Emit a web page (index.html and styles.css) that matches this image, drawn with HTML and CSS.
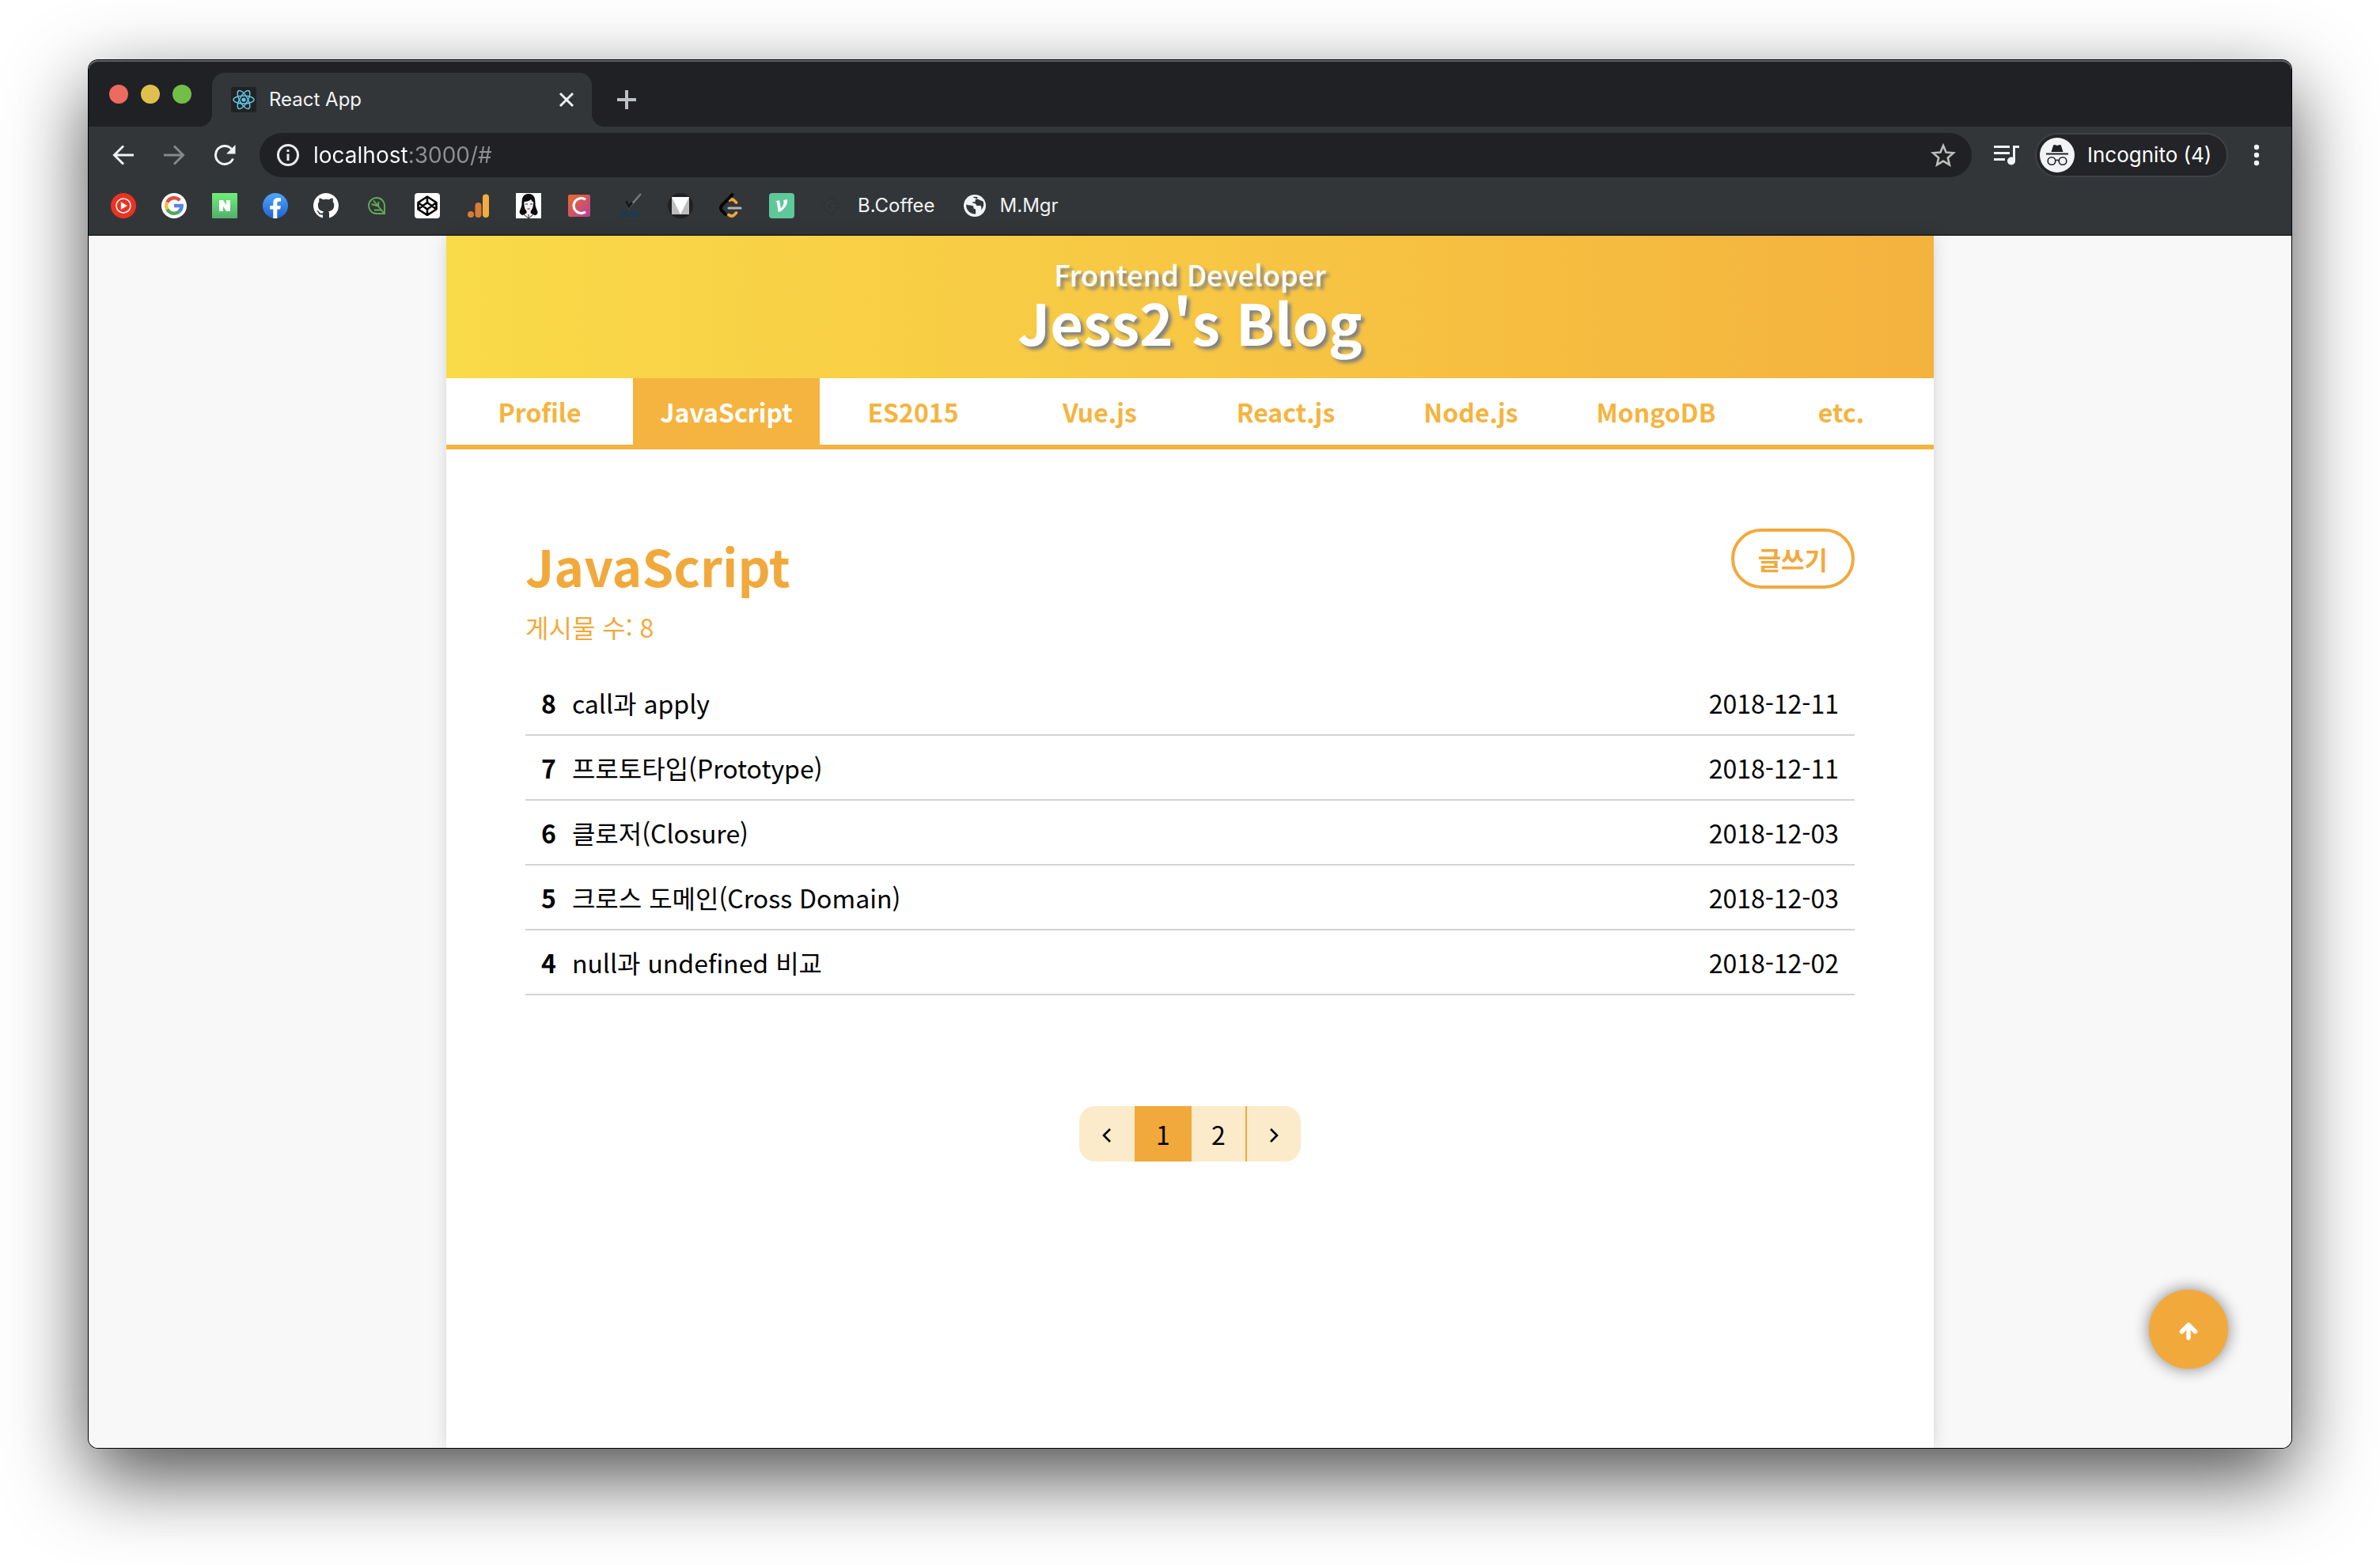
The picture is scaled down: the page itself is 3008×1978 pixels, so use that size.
FILE: index.html
```html
<!DOCTYPE html>
<html lang="ko">
<head>
<meta charset="utf-8">
<meta name="viewport" content="width=device-width, initial-scale=1">
<title>React App</title>
<link rel="stylesheet" href="styles.css">
</head>
<body>
<div class="window">
  <div class="tabstrip">
    <div class="lights">
      <button class="light light-close" aria-label="Close window"></button>
      <button class="light light-min" aria-label="Minimize window"></button>
      <button class="light light-max" aria-label="Zoom window"></button>
    </div>
    <div class="tab">
      <svg class="icon32" viewBox="0 0 32 32" aria-hidden="true"><rect width="32" height="32" rx="3" fill="#222"/><g fill="none" stroke="#61c5e8" stroke-width="1.5"><ellipse cx="16" cy="16" rx="13" ry="5"/><ellipse cx="16" cy="16" rx="13" ry="5" transform="rotate(60 16 16)"/><ellipse cx="16" cy="16" rx="13" ry="5" transform="rotate(120 16 16)"/></g><circle cx="16" cy="16" r="2.6" fill="#61c5e8"/></svg>
      <span class="tab-title">React App</span>
      <button class="tab-close" aria-label="Close tab"><svg width="20" height="20" viewBox="0 0 20 20"><path d="M2 2l16 16M18 2L2 18" stroke="#f1f3f4" stroke-width="3"/></svg></button>
    </div>
    <button class="new-tab" aria-label="New tab"><svg width="24" height="24" viewBox="0 0 24 24"><path d="M12 0v24M0 12h24" stroke="#bdc1c6" stroke-width="4"/></svg></button>
  </div>

  <div class="toolbar">
    <button class="tool" aria-label="Back"><svg width="28" height="28" viewBox="0 0 28 28" fill="none" stroke="#f1f3f4" stroke-width="3"><path d="M27 14H3M14 2.500L2.500 14L14 25.500"/></svg></button>
    <button class="tool" aria-label="Forward"><svg width="28" height="28" viewBox="0 0 28 28" fill="none" stroke="#85888a" stroke-width="3"><path d="M1 14h24M14 2.500L25.500 14L14 25.500"/></svg></button>
    <button class="tool" aria-label="Reload"><svg width="28" height="28" viewBox="0 0 28 28"><path d="M24.500 18.500A11.500 11.500 0 1 1 22.500 6.200" fill="none" stroke="#f1f3f4" stroke-width="3"/><path d="M27.500 1v11.500H16z" fill="#f1f3f4"/></svg></button>
    <div class="omnibox">
      <svg width="28" height="28" viewBox="0 0 28 28" aria-hidden="true"><circle cx="14" cy="14" r="12.500" fill="none" stroke="#e8eaed" stroke-width="3"/><path d="M12.500 12.500h3V21h-3zM12.500 7h3v3h-3z" fill="#e8eaed"/></svg>
      <input class="url" type="text" value="localhost:3000/#" aria-label="Address" spellcheck="false">
      <button class="star" aria-label="Bookmark this page"><svg width="32" height="32" viewBox="0 0 32 32"><path d="M16 4l3.600 8.500 9.200.8-7 6.100 2.100 9L16 23.600l-7.900 4.800 2.100-9-7-6.100 9.200-.8z" fill="none" stroke="#bdbdbd" stroke-width="2.600"/></svg></button>
    </div>
    <button class="queue" aria-label="Media controls"><svg width="32" height="28" viewBox="0 0 32 28" fill="#f1f3f4"><path d="M0 2h20v3H0zM0 10h20v3H0zM0 18h14v3H0zM24 2h8v3h-5v16h-3z"/><circle cx="22" cy="21.500" r="5"/></svg></button>
    <button class="profile">
      <svg width="44" height="44" viewBox="0 0 44 44" aria-hidden="true"><circle cx="22" cy="22" r="22" fill="#f1f3f4"/><path d="M14.500 18l2.600-8.200c.3-.8 1-1 1.800-.7l3.100.9 3.100-.9c.8-.3 1.500-.1 1.800.7L29.500 18zM8 19.500h28v2H8z" fill="#202124"/><g fill="none" stroke="#202124" stroke-width="1.600"><circle cx="15" cy="29.500" r="4.800"/><circle cx="29" cy="29.500" r="4.800"/><path d="M19.800 29c1.400-1 3-1 4.400 0"/></g></svg>
      <span>Incognito (4)</span>
    </button>
    <button class="menu" aria-label="Menu"><svg width="8" height="28" viewBox="0 0 8 28" fill="#f1f3f4"><circle cx="4" cy="4" r="3.200"/><circle cx="4" cy="14" r="3.200"/><circle cx="4" cy="24" r="3.200"/></svg></button>
  </div>

  <nav class="bookmarks" aria-label="Bookmarks">
    <a href="#" aria-label="YouTube Music"><svg class="icon32" viewBox="0 0 32 32"><circle cx="16" cy="16" r="16" fill="#ea3323"/><circle cx="16" cy="16" r="9" fill="none" stroke="#fff" stroke-width="1.500"/><path d="M12.800 11.300L21 16l-8.200 4.700z" fill="#fff"/></svg></a>
    <a href="#" aria-label="Google"><svg class="icon32" viewBox="0 0 32 32"><circle cx="16" cy="16" r="16" fill="#fff"/><g fill="none" stroke-width="4.400"><path d="M23.200 9.200A9.800 9.800 0 0 0 7.300 11.600" stroke="#d9503f"/><path d="M7.300 11.600a9.800 9.800 0 0 0 0 8.900" stroke="#f2bd42"/><path d="M7.300 20.500a9.800 9.800 0 0 0 15 3" stroke="#58a55c"/><path d="M22.300 23.500a9.800 9.800 0 0 0 3.400-7.500H16" stroke="#5384ec"/></g></svg></a>
    <a href="#" aria-label="Naver"><svg class="icon32" viewBox="0 0 32 32"><defs><linearGradient id="nv" x2="0" y2="1"><stop stop-color="#70ee78"/><stop offset="1" stop-color="#52b06c"/></linearGradient></defs><rect width="32" height="32" rx="1" fill="url(#nv)"/><path d="M9 9h5l4 6V9h5v14h-5l-4-6v6H9z" fill="#fff"/></svg></a>
    <a href="#" aria-label="Facebook"><svg class="icon32" viewBox="0 0 32 32"><defs><linearGradient id="fb" x2="0" y2="1"><stop stop-color="#4da7f7"/><stop offset="1" stop-color="#2461d8"/></linearGradient></defs><circle cx="16" cy="16" r="16" fill="url(#fb)"/><path d="M13.300 32V20.500H9.200V16h4.100v-3.600c0-4.100 2.400-6.300 6.100-6.300 1.800 0 3.600.3 3.600.3v4h-2c-2 0-2.700 1.200-2.700 2.500V16h4.500l-.7 4.500h-3.800V32z" fill="#fff"/></svg></a>
    <a href="#" aria-label="GitHub"><svg class="icon32" viewBox="0 0 16 16"><path fill="#fff" d="M8 0C3.580 0 0 3.580 0 8c0 3.540 2.290 6.530 5.470 7.590.4.070.55-.17.55-.38 0-.19-.01-.82-.01-1.490-2.010.37-2.530-.49-2.690-.94-.09-.23-.48-.94-.82-1.130-.28-.15-.68-.52-.01-.53.630-.01 1.080.58 1.230.82.720 1.210 1.870.87 2.330.66.070-.52.280-.87.510-1.070-1.780-.2-3.640-.89-3.640-3.950 0-.87.310-1.590.82-2.150-.08-.2-.36-1.020.08-2.120 0 0 .67-.21 2.200.82.640-.18 1.320-.27 2-.27s1.360.09 2 .27c1.530-1.040 2.200-.82 2.200-.82.440 1.100.16 1.920.08 2.120.51.560.82 1.270.82 2.150 0 3.070-1.870 3.750-3.650 3.950.29.250.54.730.54 1.480 0 1.070-.01 1.930-.01 2.200 0 .21.150.46.55.38A8.010 8.010 0 0 0 16 8c0-4.420-3.580-8-8-8z"/></svg></a>
    <a href="#" aria-label="Leaf"><svg class="icon32" viewBox="0 0 32 32"><g fill="none" stroke="#5fae50" stroke-width="1.900"><path d="M26 26H15.500A10 10 0 1 1 26 16zM25 25L12 9.500M18 16.500l-8.500-2.500M18 17l.5-6M22 21.500H13"/></g></svg></a>
    <a href="#" aria-label="CodePen"><svg class="icon32" viewBox="0 0 32 32"><rect width="32" height="32" rx="4" fill="#fff"/><path d="M16 4.500L27.500 12v8.500L16 27.800 4.500 20.500V12zM16 4.500V12M16 20.500v7M4.500 12L16 20.500 27.500 12M4.500 20.500L16 12l11.500 8.500" fill="none" stroke="#000" stroke-width="2.600" stroke-linejoin="round"/></svg></a>
    <a href="#" aria-label="Analytics"><svg class="icon32" viewBox="0 0 32 32"><circle cx="7" cy="27" r="4" fill="#d97c38"/><rect x="12.500" y="12" width="8" height="19" rx="4" fill="#d97c38"/><rect x="22" y="1.500" width="8" height="29.500" rx="4" fill="#f2ad41"/></svg></a>
    <a href="#" aria-label="Portrait"><svg class="icon32" viewBox="0 0 32 32"><path fill="#fff" d="M0 0h32v32H0z"/><path d="M16 1C8 1 7.500 8 7.500 13c0 5-2 7-3 11 1 4 5 5 8 4h8c4 1 7 0 7-4-1-4-3-6-3-11C24.500 8 24 1 16 1z" fill="#0b0b0d"/><path d="M10.500 11c3 0 7-1 8.500-3 1 2 2 3 3.200 3.300 0 5-1.200 9.700-3.500 11.200v3L26 29v3H6v-3l7.500-3.500v-3C11 20.500 10 16 10.500 11z" fill="#f2f2f2"/><path d="M12 14h3M18 14h3M14.500 20h3M10 27l6 5 6-5M16 27v5" stroke="#222" fill="none"/></svg></a>
    <a href="#" aria-label="C"><svg class="icon32" viewBox="0 0 32 32"><defs><linearGradient id="cc" x2="1" y2="1"><stop stop-color="#ea6b2c"/><stop offset="1" stop-color="#b93f98"/></linearGradient></defs><rect x="2" y="2" width="28" height="28" rx="2" fill="url(#cc)"/><path d="M24 8.200A9.500 9.500 0 1 0 24 23.800" fill="none" stroke="#fff" stroke-width="3.200"/></svg></a>
    <a href="#" aria-label="JSON"><svg class="icon32 overflowing" viewBox="0 0 32 32"><path d="M11 10l4 8L30 1" fill="none" stroke="#77797d" stroke-width="2.500"/><path d="M11 10l4 7 4-5" fill="none" stroke="#17181c" stroke-width="3"/><text class="json" x="1" y="31">JSON</text></svg></a>
    <a href="#" aria-label="Material"><svg class="icon32" viewBox="0 0 32 32"><circle cx="16" cy="16" r="16" fill="#212121"/><path fill="#bdbdbd" d="M5 5h22v22H5z"/><path fill="#fff" d="M5 5h22L16 27z"/></svg></a>
    <a href="#" aria-label="LeetCode"><svg class="icon32" viewBox="0 0 32 32" fill="none" stroke-width="3.800" stroke-linecap="round"><path d="M14.500 9c2-1.500 4-1 5.500.5l2.500 2.500M13 27.500c2.500 2 5 2 7 0l2.500-2.500" stroke="#f2a33a"/><path d="M17.500 2L4 16c-1.500 2-1.500 4 0 6l5 5" stroke="#000"/><path d="M13 19h15" stroke="#b3b3b3" stroke-width="3.200"/></svg></a>
    <a href="#" aria-label="Velog"><svg class="icon32" viewBox="0 0 32 32"><rect width="32" height="32" rx="4" fill="#5fc89b"/><path d="M8 10.500l5-1.500 2 10.500c3-3.500 4.200-6.500 3.200-10.500L23 8c.8 6-3 12-9 15.500h-2.500L10 12z" fill="#fff"/></svg></a>
    <a class="labelled" href="#"><svg class="icon32" viewBox="0 0 32 32" aria-hidden="true"><path d="M15 3l12 13-12 13L3 16z" fill="#313335"/><path d="M18 11a6 6 0 1 0 1 9M15 16h4" fill="none" stroke="#36393c" stroke-width="2"/></svg>B.Coffee</a>
    <a class="labelled" href="#"><svg class="icon32" viewBox="0 0 32 32" aria-hidden="true"><circle cx="16" cy="16" r="14" fill="#f1f3f4"/><path d="M5.200 14.500c3.500 1.500 6.800.5 9 2.200.8 1-.4 2 .4 2.900 1.200.6 2.500.4 2.500 2v4.900A11 11 0 0 1 5.200 14.500zM13.500 5.300c3-1 5.500-.3 6 .2-.4 1.800-.5 2.300-2.500 2.500-.8.900.3 2.200-.7 3-1.300.6-2.500-.3-3.300.8-.3 1.200 1.500 1 2.800 1.200 2 .3 1.700 2.700 3.200 3 1.500.2 3-.8 4.500.2 1 1.200 1.200 3 .2 5.300 3.300-2.600 4.200-7 2.800-11" fill="#323639"/></svg>M.Mgr</a>
  </nav>

  <div class="viewport">
    <div class="page">
      <header class="banner">
        <p class="role">Frontend Developer</p>
        <h1 class="blog-title">Jess2's Blog</h1>
      </header>
      <nav class="categories" aria-label="Categories">
        <a href="#">Profile</a>
        <a class="active" href="#">JavaScript</a>
        <a href="#">ES2015</a>
        <a href="#">Vue.js</a>
        <a href="#">React.js</a>
        <a href="#">Node.js</a>
        <a href="#">MongoDB</a>
        <a href="#">etc.</a>
      </nav>
      <main class="content">
        <div class="heading">
          <div>
            <h2 class="category-title">JavaScript</h2>
            <p class="count">게시물 수: 8</p>
          </div>
          <button class="write">글쓰기</button>
        </div>
        <table class="posts">
          <tr><th scope="row">8</th><td><a href="#">call과 apply</a></td><td class="date">2018-12-11</td></tr>
          <tr><th scope="row">7</th><td><a href="#">프로토타입(Prototype)</a></td><td class="date">2018-12-11</td></tr>
          <tr><th scope="row">6</th><td><a href="#">클로저(Closure)</a></td><td class="date">2018-12-03</td></tr>
          <tr><th scope="row">5</th><td><a href="#">크로스 도메인(Cross Domain)</a></td><td class="date">2018-12-03</td></tr>
          <tr><th scope="row">4</th><td><a href="#">null과 undefined 비교</a></td><td class="date">2018-12-02</td></tr>
        </table>
        <nav class="pagination" aria-label="Pages">
          <button class="prev" aria-label="Previous"><svg width="12" height="20" viewBox="0 0 12 20"><path d="M10 2L2 10l8 8" fill="none" stroke="#000" stroke-width="2.600"/></svg></button>
          <button class="current">1</button>
          <button>2</button>
          <button class="next" aria-label="Next"><svg width="12" height="20" viewBox="0 0 12 20"><path d="M2 2l8 8-8 8" fill="none" stroke="#000" stroke-width="2.600"/></svg></button>
        </nav>
      </main>
    </div>
    <button class="to-top" aria-label="Back to top"><svg width="24" height="24" viewBox="0 0 24 24"><path d="M12 20V4M3.500 12L12 3.500l8.500 8.500" fill="none" stroke="#fff" stroke-width="5.500" stroke-linecap="round" stroke-linejoin="round"/></svg></button>
  </div>
</div>
</body>
</html>
```

FILE: styles.css
```css
* { box-sizing: border-box; }

body {
  margin: 0;
  min-height: 100vh;
  padding: 76px 112px 148px;
  display: flex;
  background: #fff;
  font-family: "Noto Sans CJK KR", sans-serif;
  font-size: 32px;
  line-height: 48px;
  color: #000;
}

button, input {
  margin: 0;
  padding: 0;
  border: 0;
  background: none;
  font: inherit;
  color: inherit;
}

button { display: flex; align-items: center; justify-content: center; cursor: pointer; }
a { color: inherit; text-decoration: none; }
svg { display: block; flex: none; }
h1, h2, p { margin: 0; }

.window {
  flex: 1;
  min-width: 0;
  display: flex;
  flex-direction: column;
  border-radius: 12px;
  overflow: hidden;
  box-shadow: 0 0 0 1px #000, 0 36px 100px rgba(0, 0, 0, .7);
}

.icon32 { width: 32px; height: 32px; }
.overflowing { overflow: visible; }

/* browser chrome */
.tabstrip, .toolbar, .bookmarks {
  display: flex;
  font-family: Inter, sans-serif;
  font-size: 24px;
  line-height: 32px;
  color: #f1f3f4;
  background: #323639;
}

.tabstrip {
  height: 84px;
  padding: 2px 0 0 26px;
  align-items: flex-end;
  background: #202124;
  border-radius: 12px 12px 0 0;
  box-shadow: inset 0 2px 0 #606364;
}

.lights { display: flex; gap: 16px; align-self: center; margin-right: 26px; }
.light { width: 24px; height: 24px; border-radius: 50%; }
.light-close { background: #ec6a5e; }
.light-min { background: #e0c04c; }
.light-max { background: #72be47; }

.tab {
  position: relative;
  width: 480px;
  height: 68px;
  padding: 0 20px 0 24px;
  display: flex;
  align-items: center;
  gap: 16px;
  background: #323639;
  border-radius: 16px 16px 0 0;
}

.tab::before, .tab::after {
  content: "";
  position: absolute;
  bottom: 0;
  width: 16px;
  height: 16px;
}
.tab::before { left: -16px; background: radial-gradient(circle at 0 0, transparent 16px, #323639 16px); }
.tab::after { right: -16px; background: radial-gradient(circle at 100% 0, transparent 16px, #323639 16px); }

.tab-title { flex: 1; }
.tab-close { width: 24px; height: 24px; }
.new-tab { height: 68px; margin-left: 32px; }

.toolbar { padding: 8px 8px 8px 12px; }
.tool { width: 64px; height: 56px; }

.omnibox {
  flex: 1;
  margin-left: 12px;
  height: 56px;
  padding: 0 20px 0 22px;
  display: flex;
  align-items: center;
  gap: 18px;
  border-radius: 28px;
  background: #202124;
}

.url {
  flex: 1;
  min-width: 0;
  height: 40px;
  font-size: 28px;
  line-height: 40px;
  outline: 0;
  color: transparent;
  background: linear-gradient(90deg, #fff 121px, #8e9093 121px);
  -webkit-background-clip: text;
  background-clip: text;
}

.queue { width: 80px; padding-left: 8px; }

.profile {
  height: 56px;
  width: 244px;
  padding-left: 4px;
  justify-content: flex-start;
  gap: 16px;
  border: 2px solid #3e4145;
  border-radius: 28px;
  background: #232427;
  color: #fff;
  font-size: 26px;
}

.menu { width: 72px; }

.bookmarks {
  padding: 12px 28px 20px;
  gap: 32px;
  border-bottom: 2px solid #252729;
}
.labelled { display: flex; gap: 16px; }
.labelled + .labelled { margin-left: 2px; }
.json { font: bold 11px "DejaVu Sans Mono", monospace; fill: #16395c; }

/* blog */
.viewport {
  position: relative;
  flex: 1;
  display: flex;
  justify-content: center;
  background: #f8f8f8;
}

.page {
  width: 100%;
  max-width: 1880px;
  background: #fff;
  box-shadow: 0 0 20px rgba(0, 0, 0, .15);
}

.banner {
  padding: 22px 0 38px;
  text-align: center;
  color: #fff;
  text-shadow: 4px 4px 4px #808080;
  background: linear-gradient(90deg, #f9da48, #f8cb44 40%, #f4b23e);
}
.role { font-size: 36px; line-height: 52px; font-weight: 500; }
.blog-title { font-size: 72px; line-height: 68px; font-weight: 700; }

.categories {
  display: grid;
  grid-template-columns: repeat(4, 236fr) repeat(4, 234fr);
  border-bottom: 6px solid #f5b43f;
  color: #f5b43f;
  font-weight: 700;
  text-align: center;
  line-height: 84px;
}
.categories .active { background: #f5b43f; color: #fff; }

.content { padding: 100px; }
.heading { display: flex; justify-content: space-between; align-items: flex-start; color: #f2a93b; }
.category-title { font-size: 64px; line-height: 92px; font-weight: 700; }
.count { margin-top: 8px; }

.write {
  height: 76px;
  padding: 0 30px;
  border: 4px solid #f2a93b;
  border-radius: 38px;
  font-weight: 700;
}

.posts { width: 100%; margin-top: 32px; border-spacing: 0; }
.posts th, .posts td { padding: 16px 0 16px 20px; border-bottom: 2px solid #d3d3d3; text-align: left; }
.posts th { width: 1px; font-weight: 700; }
.posts .date { padding-right: 20px; text-align: right; }

.pagination {
  display: grid;
  grid-template-columns: 70px 72px 68px 70px;
  justify-content: center;
  margin-top: 140px;
}
.pagination button { height: 70px; background: #fcebca; }
.pagination .prev, .pagination .next { padding-top: 4px; }
.pagination .prev { border-radius: 20px 0 0 20px; }
.pagination .current { background: #f2a93b; }
.pagination .next { border-left: 2px solid #f2a93b; border-radius: 0 20px 20px 0; }

.to-top {
  position: absolute;
  right: 80px;
  bottom: 100px;
  width: 100px;
  height: 100px;
  padding-top: 6px;
  border-radius: 50%;
  background: #f2a93b;
  box-shadow: 0 0 20px #808080;
}
```
